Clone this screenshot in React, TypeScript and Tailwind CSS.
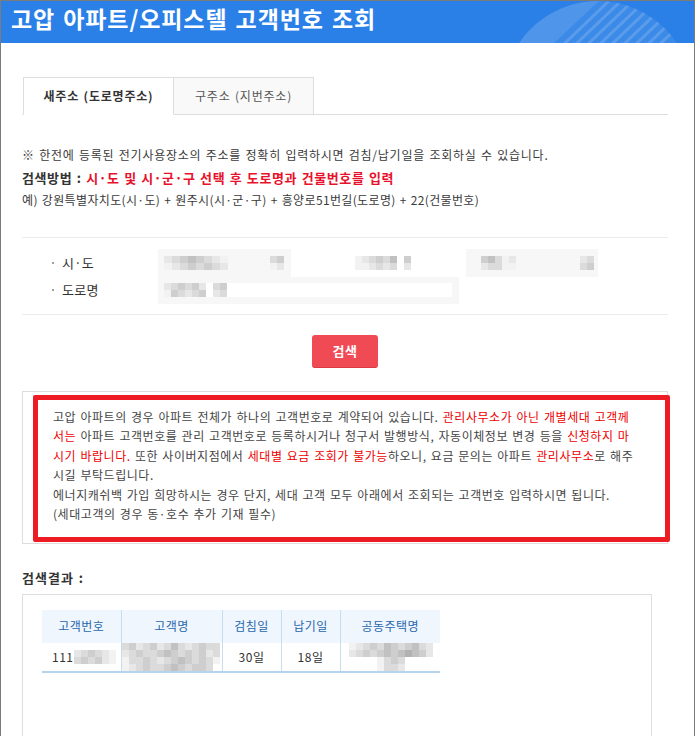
import React from "react";

const SH: Record<string, string> = {
  ".": "bg-transparent",
  w: "bg-white",
  f: "bg-[#f2f2f2]",
  e: "bg-[#e7e7e7]",
  d: "bg-[#dbdbdb]",
  c: "bg-[#cecece]",
  b: "bg-[#c1c1c1]",
  a: "bg-[#b2b2b2]",
};

function Mosaic({ rows, cw, ch }: { rows: string[]; cw: string; ch: string }) {
  return (
    <div className="flex flex-col">
      {rows.map((r, i) => (
        <div key={i} className="flex">
          {r.split("").map((c, j) => (
            <div key={j} className={`${cw} ${ch} ${SH[c]}`} />
          ))}
        </div>
      ))}
    </div>
  );
}

function HeaderDeco() {
  const stripes = [0, 1, 2, 3, 4, 5, 6, 7, 8];
  return (
    <svg className="absolute left-[500px] top-0" width="193" height="42" viewBox="0 0 193 42">
      <defs>
        <clipPath id="hdc">
          <circle cx="97" cy="95" r="95" />
        </clipPath>
      </defs>
      <g clipPath="url(#hdc)">
        <rect x="0" y="0" width="193" height="42" fill="#ffffff" fillOpacity="0.08" />
        <polygon points="0,0 98,0 53,42 0,42" fill="#ffffff" fillOpacity="0.1" />
        {stripes.map((i) => (
          <line
            key={i}
            x1={62 + i * 12}
            y1={44}
            x2={110 + i * 12}
            y2={-2}
            stroke="#ffffff"
            strokeOpacity="0.16"
            strokeWidth="3"
          />
        ))}
      </g>
    </svg>
  );
}

export default function App() {
  return (
    <div className="w-[695px] min-h-[736px] overflow-hidden bg-white border-l border-t border-r border-[#7b7b7b] font-['Noto_Sans_CJK_KR','Noto_Sans',sans-serif] text-[#333]">
      <header className="relative h-[42px] overflow-hidden bg-[#2b80e7] pl-[10px] pt-[3px]">
        <h1 className="relative z-10 text-[23px] leading-[28px] font-bold tracking-[0.9px] text-white [word-spacing:2px]">
          고압 아파트/오피스텔 고객번호 조회
        </h1>
        <HeaderDeco />
      </header>

      <main className="pl-[21px] pr-[26px]">
        {/* Tabs */}
        <div className="mt-[34px] flex border-b border-[#dddddd]">
          <div className="ml-px -mb-px flex h-[38px] w-[151px] items-center justify-center border border-[#dddddd] border-b-white bg-white text-[12px] font-bold tracking-[0.8px] text-[#333] [word-spacing:1px]">
            새주소 (도로명주소)
          </div>
          <div className="-mb-px flex h-[38px] w-[140px] items-center justify-center border-t border-r border-b border-[#dddddd] bg-[#f9f9f9] text-[12px] tracking-[0.8px] text-[#555] [word-spacing:1px]">
            구주소 (지번주소)
          </div>
        </div>

        {/* Notice */}
        <div className="mt-[29px] text-[12px] leading-[22.5px] tracking-[0.6px] [word-spacing:1px]">
          <div className="whitespace-nowrap tracking-[0.75px] text-[#3a3a3a]">
            ※ 한전에 등록된 전기사용장소의 주소를 정확히 입력하시면 검침/납기일을 조회하실 수 있습니다.
          </div>
          <div className="whitespace-nowrap text-[13px] font-bold">
            <span className="text-[#333]">검색방법 :</span>
            <span className="text-[#e8112b]"> 시·도 및 시·군·구 선택 후 도로명과 건물번호를 입력</span>
          </div>
          <div className="whitespace-nowrap tracking-[0.35px] text-[#3a3a3a]">
            예) 강원특별자치도(시·도) + 원주시(시·군·구) + 흥양로51번길(도로명) + 22(건물번호)
          </div>
        </div>

        {/* Form */}
        <div className="mt-[25px] h-px bg-[#ebebeb]" />
        <div className="pt-[11px] pb-[10px] text-[13px] text-[#333]">
          <div className="flex h-[28px] items-center">
            <div className="flex w-[136px] items-center pl-[30px]">
              <span className="h-[2px] w-[2px] bg-[#a0a0a0]" />
              <span className="ml-[8px] tracking-[0.3px]">시·도</span>
            </div>
            <div className="flex h-[28px] w-[133px] items-center bg-[#f7f7f7] pl-[6px]">
              <Mosaic cw="w-[8px]" ch="h-[7px]" rows={["edcbcdef", "fedcdcde"]} />
              <div className="ml-[42px]">
                <Mosaic cw="w-[7px]" ch="h-[7px]" rows={["dc", "fe"]} />
              </div>
            </div>
            <div className="ml-[52px] flex h-[28px] w-[112px] items-center bg-white pl-[12px]">
              <Mosaic cw="w-[7px]" ch="h-[7px]" rows={["fedcdb.c", "ffeded.e"]} />
            </div>
            <div className="ml-[11px] flex h-[28px] w-[132px] items-center bg-[#f7f7f7] pl-[15px]">
              <Mosaic cw="w-[7px]" ch="h-[7px]" rows={["cbdfe", "eddff"]} />
              <div className="ml-[64px]">
                <Mosaic cw="w-[7px]" ch="h-[7px]" rows={["ed", "dc"]} />
              </div>
            </div>
          </div>
          <div className="flex h-[27px] items-center">
            <div className="flex w-[136px] items-center pl-[30px]">
              <span className="h-[2px] w-[2px] bg-[#a0a0a0]" />
              <span className="ml-[8px] tracking-[0.3px]">도로명</span>
            </div>
            <div className="flex h-[27px] w-[301px] items-center bg-[#f7f7f7] pl-[6px]">
              <div className="flex h-[14px] w-[288px] items-center bg-white">
                <Mosaic cw="w-[7px]" ch="h-[7px]" rows={["edcdce.dc.", "fcdedc.ed."]} />
              </div>
            </div>
          </div>
        </div>
        <div className="h-px bg-[#ebebeb]" />

        {/* Button */}
        <div className="mt-[20px] flex justify-center">
          <button className="h-[33px] w-[66px] rounded-[3px] border-b border-[#d93a44] bg-[#f04b55] text-[13px] font-bold tracking-[0.5px] text-white">
            검색
          </button>
        </div>

        {/* Notice box */}
        <div className="mt-[23px] h-[153px] border border-[#dddddd] pl-[10px] pt-[3px]">
          <div className="h-[147px] w-[637px] rounded-[2px] border-[5px] border-[#ed1c24] pl-[15px] pt-[7px] text-[12px] leading-[19.6px] tracking-[0.55px] text-[#454545] [word-spacing:1px]">
            <div className="whitespace-nowrap">
              고압 아파트의 경우 아파트 전체가 하나의 고객번호로 계약되어 있습니다.{" "}
              <span className="text-[#ee0000]">관리사무소가 아닌 개별세대 고객께</span>
            </div>
            <div className="whitespace-nowrap">
              <span className="text-[#ee0000]">서는</span> 아파트 고객번호를 관리 고객번호로 등록하시거나 청구서 발행방식, 자동이체정보 변경 등을{" "}
              <span className="text-[#ee0000]">신청하지 마</span>
            </div>
            <div className="whitespace-nowrap">
              <span className="text-[#ee0000]">시기 바랍니다.</span> 또한 사이버지점에서{" "}
              <span className="text-[#ee0000]">세대별 요금 조회가 불가능</span>하오니, 요금 문의는 아파트{" "}
              <span className="text-[#ee0000]">관리사무소</span>로 해주
            </div>
            <div className="whitespace-nowrap">시길 부탁드립니다.</div>
            <div className="whitespace-nowrap">
              에너지캐쉬백 가입 희망하시는 경우 단지, 세대 고객 모두 아래에서 조회되는 고객번호 입력하시면 됩니다.
            </div>
            <div className="whitespace-nowrap">(세대고객의 경우 동·호수 추가 기재 필수)</div>
          </div>
        </div>

        {/* Results */}
        <div className="mt-[26px] text-[13px] font-bold leading-[16px] tracking-[1px] text-[#333] [word-spacing:1px]">
          검색결과 :
        </div>
        <div className="mt-[8px] h-[170px] w-[630px] border border-[#dddddd] pl-[19px] pt-[15px]">
          <table className="border-collapse text-[12px] tracking-[0.5px]">
            <thead>
              <tr className="h-[33px] bg-[#eff6fd] text-[#2767ad]">
                <th className="w-[79px] p-0 font-normal">고객번호</th>
                <th className="w-[101px] border-l border-[#c6dcef] p-0 font-normal">고객명</th>
                <th className="w-[59px] border-l border-[#c6dcef] p-0 font-normal">검침일</th>
                <th className="w-[59px] border-l border-[#c6dcef] p-0 font-normal">납기일</th>
                <th className="w-[100px] border-l border-[#c6dcef] p-0 font-normal">공동주택명</th>
              </tr>
            </thead>
            <tbody>
              <tr className="h-[29px] border-b-2 border-[#b4d3ee] text-[#333]">
                <td className="p-0 pl-[10px]">
                  <div className="flex items-center">
                    <span>111</span>
                    <div className="ml-[1px]">
                      <Mosaic cw="w-[7px]" ch="h-[7px]" rows={["edcdef", "dcdcef"]} />
                    </div>
                  </div>
                </td>
                <td className="border-l border-[#c6dcef] p-0 align-top">
                  <Mosaic
                    cw="w-[7px]"
                    ch="h-[7px]"
                    rows={["dcedcedbdedcdd", "edcddcbcdcdced", "fddcdedcbcdcdf", "fedcddcbcdccdw"]}
                  />
                </td>
                <td className="border-l border-[#c6dcef] p-0 text-center">30일</td>
                <td className="border-l border-[#c6dcef] p-0 text-center">18일</td>
                <td className="border-l border-[#c6dcef] p-0 pl-[8px] align-top">
                  <Mosaic
                    cw="w-[7px]"
                    ch="h-[7px]"
                    rows={["fedcdbcdcbde", "edcdcbcbabce", "....fdcd....", "....fdde...."]}
                  />
                </td>
              </tr>
            </tbody>
          </table>
        </div>
      </main>
    </div>
  );
}
